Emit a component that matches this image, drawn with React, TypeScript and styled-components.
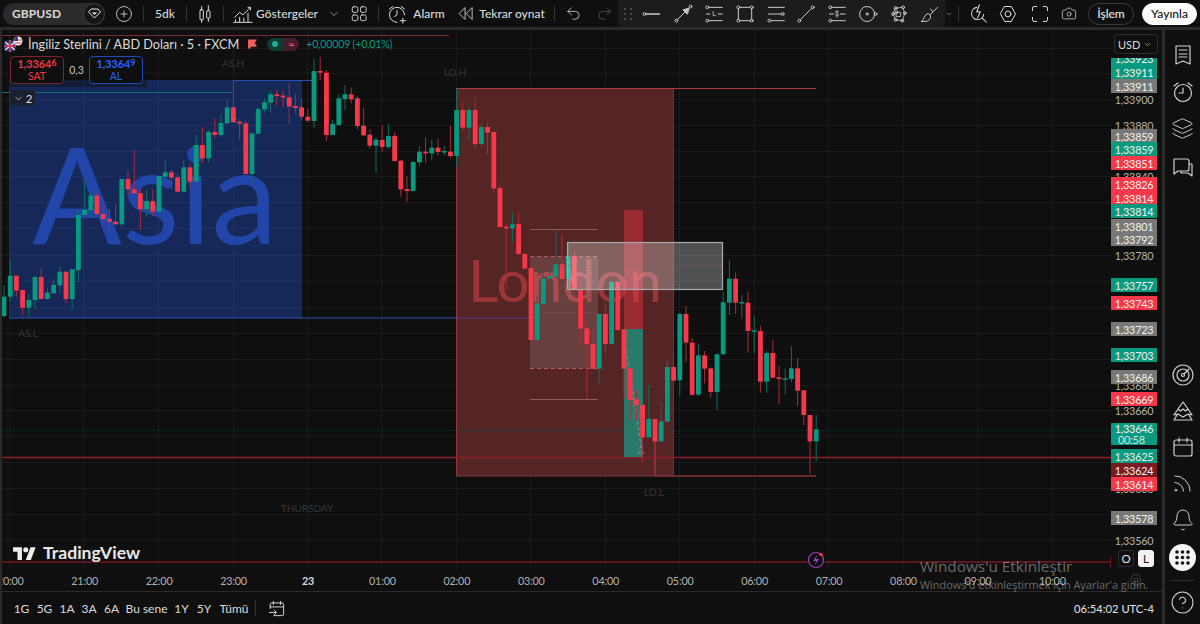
import React, { FC, ReactNode } from 'react';
import styled, { createGlobalStyle } from 'styled-components';
import { Bell, Camera, ChevronDown, CirclePlus, CircleHelp, Layers, Redo2, Rss, Undo2 } from 'lucide-react';

const FONT = `Lato, "Noto Sans", "Liberation Sans", sans-serif`;
const GREEN = '#089981';
const RED = '#f7374a';

type Row = [string, number, number, number, number];

const toCandles = (base: number, rows: Row[]) =>
  rows.map(([c, top, bottom, high, low]) => ({
    up: c === 'g',
    top: base + top / 3,
    bottom: base + bottom / 3,
    high: base + high / 3,
    low: base + low / 3,
  }));

const candles = [
  ...toCandles(80, [
    ['g', 650, 708, 615, 712], ['g', 587, 650, 540, 665], ['r', 587, 632, 587, 650], ['r', 630, 683, 630, 705],
    ['g', 660, 683, 642, 712], ['g', 591, 660, 585, 688], ['r', 591, 657, 563, 657], ['g', 638, 657, 622, 660],
    ['g', 615, 640, 595, 640], ['g', 575, 616, 560, 638], ['r', 575, 657, 575, 670], ['g', 568, 657, 568, 688],
    ['g', 405, 570, 393, 605], ['g', 390, 405, 300, 405], ['g', 347, 390, 335, 415], ['r', 347, 402, 335, 405],
    ['r', 402, 417, 370, 430], ['r', 417, 425, 385, 455], ['r', 425, 433, 373, 435], ['g', 297, 433, 297, 440],
    ['r', 297, 328, 272, 345], ['r', 328, 340, 210, 340], ['r', 340, 387, 325, 450], ['g', 363, 387, 330, 410],
    ['r', 363, 395, 328, 408], ['g', 288, 395, 288, 395], ['g', 277, 290, 238, 300], ['r', 277, 293, 270, 325],
    ['r', 292, 335, 283, 337], ['g', 262, 335, 240, 335], ['r', 262, 305, 250, 325], ['g', 195, 305, 165, 305],
    ['r', 195, 235, 140, 250], ['g', 156, 235, 150, 248], ['r', 156, 165, 115, 175], ['g', 129, 165, 102, 170],
    ['g', 82, 130, 60, 130], ['r', 82, 127, 0, 127], ['r', 125, 131, 118, 180], ['r', 130, 282, 122, 282],
    ['g', 160, 282, 160, 315], ['g', 87, 161, 82, 161], ['g', 67, 88, 55, 97], ['g', 43, 68, 32, 97],
    ['r', 43, 48, 30, 78], ['r', 47, 52, 32, 82], ['r', 52, 80, 10, 130], ['r', 78, 84, 42, 100],
    ['r', 82, 110, 55, 120], ['r', 110, 122, 87, 125],
  ]),
  ...toCandles(60, [
    ['g', 33, 183, -3, 205], ['r', 33, 38, -9, 60], ['r', 38, 225, 30, 243], ['g', 192, 225, 180, 225],
    ['g', 115, 195, 103, 197], ['g', 103, 117, 75, 150], ['r', 103, 118, 83, 130], ['r', 115, 198, 108, 208],
    ['r', 197, 226, 142, 228], ['r', 224, 257, 208, 267], ['g', 239, 257, 232, 340], ['r', 240, 261, 196, 275],
    ['g', 228, 261, 192, 266], ['r', 228, 303, 217, 304], ['r', 302, 388, 300, 410], ['r', 387, 393, 348, 425],
    ['g', 306, 393, 303, 395], ['g', 275, 307, 258, 320], ['r', 275, 280, 232, 308], ['g', 263, 280, 240, 302],
    ['r', 263, 276, 236, 287], ['g', 273, 276, 258, 287], ['r', 275, 288, 197, 293],
  ]),
  ...toCandles(80, [
    ['g', 90, 228, 25, 260], ['r', 90, 143, 67, 152], ['g', 90, 143, 82, 180], ['r', 90, 192, 52, 207],
    ['g', 141, 192, 132, 198], ['r', 141, 158, 125, 222], ['r', 156, 325, 156, 335], ['r', 324, 441, 316, 443],
  ]),
  ...toCandles(220, [
    ['r', 20, 25, 8, 210], ['g', 13, 25, -20, 66], ['r', 12, 102, -24, 105], ['r', 102, 146, 100, 148],
    ['r', 144, 360, 144, 362], ['g', 250, 360, 225, 362], ['g', 176, 252, 145, 350], ['g', 168, 176, 145, 258],
    ['g', 133, 170, 28, 175], ['r', 133, 177, 42, 178], ['g', 110, 177, 65, 210], ['r', 108, 207, 95, 210],
    ['r', 208, 326, 168, 375], ['r', 325, 372, 300, 537], ['r', 372, 446, 318, 448], ['g', 282, 446, 280, 492],
    ['r', 282, 372, 248, 402], ['g', 186, 372, 182, 375], ['r', 186, 330, 175, 332], ['r', 328, 446, 328, 535],
    ['r', 445, 540, 445, 600], ['r', 538, 555, 510, 600], ['r', 555, 652, 555, 728], ['g', 597, 652, 495, 652],
    ['r', 597, 664, 597, 768], ['g', 604, 664, 545, 667], ['g', 441, 605, 422, 610], ['r', 441, 482, 418, 484],
    ['g', 282, 481, 278, 527], ['r', 282, 368, 258, 425], ['r', 368, 524, 355, 528], ['g', 406, 524, 372, 528],
    ['r', 406, 446, 393, 490], ['r', 445, 516, 442, 533], ['g', 403, 516, 400, 570], ['g', 247, 403, 215, 405],
    ['g', 176, 248, 120, 285], ['r', 176, 248, 158, 282], ['g', 246, 249, 225, 296], ['r', 248, 333, 214, 398],
    ['g', 331, 334, 286, 400], ['r', 333, 485, 318, 518], ['g', 399, 485, 393, 518], ['r', 399, 473, 360, 475],
    ['r', 472, 477, 437, 552], ['g', 475, 478, 445, 522], ['g', 445, 477, 378, 487], ['r', 445, 512, 414, 557],
    ['r', 511, 585, 510, 615], ['r', 585, 664, 585, 762], ['g', 628, 664, 585, 724],
  ]),
];

const gridY = [48, 73, 99, 125, 151, 176, 202, 228, 255, 281, 307, 333, 359, 385, 410, 436, 462, 488, 514, 540];
const gridX = [9, 83, 158, 233, 307, 381, 456, 530, 605, 679, 754, 828, 903, 977, 1052];

type Kind = 'green' | 'red' | 'gray' | 'dark' | 'plain';

const priceTags: [string, number, Kind][] = [
  ['1,33900', 99, 'plain'], ['1,33880', 125, 'plain'], ['1,33840', 176, 'plain'], ['1,33780', 255, 'plain'],
  ['1,33760', 281, 'plain'], ['1,33680', 385, 'plain'], ['1,33660', 410, 'plain'], ['1,33600', 488, 'plain'],
  ['1,33580', 514, 'plain'], ['1,33560', 540, 'plain'],
  ['1,33923', 58, 'green'], ['1,33911', 72, 'green'], ['1,33911', 86, 'gray'], ['1,33859', 136, 'gray'],
  ['1,33859', 149, 'green'], ['1,33851', 163, 'red'], ['1,33826', 184, 'red'], ['1,33814', 198, 'red'],
  ['1,33814', 211, 'green'], ['1,33801', 226, 'gray'], ['1,33792', 239, 'gray'], ['1,33757', 285, 'green'],
  ['1,33743', 303, 'red'], ['1,33723', 329, 'gray'], ['1,33703', 355, 'green'], ['1,33686', 377, 'gray'],
  ['1,33669', 399, 'red'], ['1,33625', 456, 'green'], ['1,33624', 470, 'dark'], ['1,33614', 484, 'red'],
  ['1,33578', 518, 'gray'],
];

const tagColors: Record<Kind, string> = {
  green: GREEN,
  red: RED,
  gray: '#787878',
  dark: '#7a1a22',
  plain: 'transparent',
};

const hours = ['20:00', '21:00', '22:00', '23:00', '23', '01:00', '02:00', '03:00', '04:00', '05:00', '06:00', '07:00', '08:00', '09:00', '10:00'];
const ranges: [string, number][] = [['1G', 23], ['5G', 23], ['1A', 22], ['3A', 22], ['6A', 23], ['Bu sene', 47], ['1Y', 23], ['5Y', 22], ['Tümü', 38]];

const GlobalStyle = createGlobalStyle`
  html, body { margin: 0; padding: 0; background: #0f0f0f; }
  body { font-family: ${FONT}; color: #dbdbdb; }
`;

const Page = styled.div`
  position: relative;
  width: 1200px;
  height: 624px;
  overflow: hidden;
  display: flex;
  flex-direction: column;
  background: #0f0f0f;
`;

const TopBar = styled.header`
  height: 27px;
  flex: none;
  display: flex;
  align-items: center;
  padding-left: 3px;
  background: #0f0f0f;
  font-size: 12px;
  font-weight: 500;
`;

const SymbolPill = styled.div`
  width: 102px;
  height: 22px;
  flex: none;
  display: flex;
  align-items: center;
  justify-content: space-between;
  padding-left: 9px;
  box-sizing: border-box;
  border-radius: 11px;
  background: #2b2b2b;
  font-weight: 700;
  letter-spacing: 0.1px;
`;

const DiamondBadge = styled.span`
  width: 20px;
  height: 20px;
  display: flex;
  align-items: center;
  justify-content: center;
  border-radius: 50%;
  background: #151515;
  border: 1px solid #3d3d3d;
`;

const Cell = styled.div<{ $w: number; $ml?: number }>`
  width: ${(p) => p.$w}px;
  margin-left: ${(p) => p.$ml || 0}px;
  flex: none;
  display: flex;
  align-items: center;
  justify-content: center;
  color: #dbdbdb;
  white-space: nowrap;
`;

const Divider = styled.span<{ $ml?: number }>`
  width: 1px;
  height: 16px;
  flex: none;
  margin-left: ${(p) => p.$ml || 0}px;
  background: #333;
`;

const DrawBar = styled.div`
  width: 327px;
  height: 28px;
  flex: none;
  align-self: flex-start;
  margin-left: 1px;
  display: flex;
  align-items: center;
  background: #1c1c1c;
  border-radius: 0 0 6px 6px;
  color: #c9c9c9;
`;

const DrawCell = styled.div`
  width: 30.8px;
  flex: none;
  display: flex;
  justify-content: center;
`;

const Grip = styled.div`
  width: 19px;
  display: flex;
  justify-content: center;
`;

const TradeButton = styled.button`
  width: 46px;
  height: 22px;
  margin-left: 11px;
  padding: 0;
  flex: none;
  border: 1px solid #3a3a3a;
  border-radius: 11px;
  background: transparent;
  color: #e6e6e6;
  font: 500 12px ${FONT};
`;

const PublishButton = styled(TradeButton)`
  width: 55px;
  margin-left: 8px;
  border-color: #fff;
  background: #fff;
  color: #0f0f0f;
`;

const TopRule = styled.div`
  height: 3px;
  flex: none;
  background: #2a2a2a;
`;

const Main = styled.div`
  flex: 1;
  min-height: 0;
  display: flex;
`;

const ChartColumn = styled.div`
  width: 1162px;
  flex: none;
  display: flex;
  flex-direction: column;
  border-left: 2px solid #2a2a2a;
  box-sizing: border-box;
`;

const PlotRow = styled.div`
  height: 540px;
  flex: none;
  display: flex;
`;

const Plot = styled.div`
  position: relative;
  width: 1109px;
  height: 540px;
  flex: none;
  overflow: hidden;
`;

const PlotSvg = styled.svg`
  display: block;
  width: 1109px;
  height: 540px;
`;

const Legend = styled.div`
  position: absolute;
  left: 0;
  top: 6px;
  display: flex;
  align-items: center;
  height: 16px;
  font-size: 12.7px;
  white-space: nowrap;
`;

const SymbolIcon = styled.svg`
  width: 24px;
  height: 18px;
  margin: 0 2px 0 0;
`;

const Flag = styled.svg`
  width: 9px;
  height: 10px;
  margin-left: 9px;
`;

const StatusPill = styled.div`
  display: flex;
  width: 32px;
  height: 13px;
  margin-left: 10px;
`;

const StatusHalf = styled.span<{ $bg: string; $radius: string }>`
  flex: 1;
  display: flex;
  align-items: center;
  justify-content: center;
  background: ${(p) => p.$bg};
  border-radius: ${(p) => p.$radius};
  color: #e8507a;
  font-size: 12px;
  line-height: 13px;
`;

const StatusDot = styled.span`
  width: 6px;
  height: 6px;
  border-radius: 50%;
  background: #22ab94;
`;

const Change = styled.span`
  margin-left: 7px;
  color: ${GREEN};
  font-size: 10.6px;
  letter-spacing: -0.2px;
`;

const OrderPanel = styled.div`
  position: absolute;
  left: 7px;
  top: 25px;
  padding: 1px 4px 3px 1px;
  display: flex;
  align-items: center;
  background: rgba(15, 15, 15, 0.45);
`;

const OrderBox = styled.div<{ $color: string; $border: string }>`
  width: 54px;
  height: 28px;
  box-sizing: border-box;
  display: flex;
  flex-direction: column;
  align-items: center;
  justify-content: center;
  border: 1px solid ${(p) => p.$border};
  border-radius: 4px;
  background: #0f0f0f;
  color: ${(p) => p.$color};
  font-size: 10.5px;
  line-height: 12px;
`;

const OrderPrice = styled.span`
  font-size: 10.8px;
  font-weight: 700;
  sup { font-size: 9px; line-height: 0; vertical-align: 2px; }
`;

const Spread = styled.span`
  width: 25px;
  text-align: center;
  font-size: 10.5px;
  color: #c4c4c4;
`;

const CollapseChip = styled.div`
  position: absolute;
  left: 8px;
  top: 60px;
  width: 25px;
  height: 16px;
  display: flex;
  align-items: center;
  justify-content: center;
  gap: 2px;
  border-radius: 3px;
  background: #1b2030;
  font-size: 11.5px;
`;

const Faint = styled.span<{ $x: number; $y: number }>`
  position: absolute;
  left: ${(p) => p.$x}px;
  top: ${(p) => p.$y}px;
  transform: translate(-50%, -50%);
  color: #383838;
  font-size: 10px;
  white-space: nowrap;
`;

const Logo = styled.div`
  position: absolute;
  left: 10px;
  top: 512px;
  display: flex;
  align-items: center;
  gap: 6px;
  color: #e8e8e8;
  font-size: 17.6px;
  font-weight: 700;
`;

const Boost = styled.div`
  position: absolute;
  left: 805px;
  top: 521px;
  width: 18px;
  height: 18px;
  display: flex;
  background: #0f0f0f;
  border-radius: 50%;
`;

const PriceAxis = styled.div`
  position: relative;
  flex: 1;
  overflow: hidden;
`;

const CurrencyCover = styled.div`
  position: absolute;
  left: 0;
  top: 0;
  right: 0;
  height: 27.5px;
  z-index: 2;
  background: #0f0f0f;
`;

const CurrencyButton = styled.div`
  position: absolute;
  left: 3px;
  top: 4px;
  width: 44px;
  height: 20px;
  box-sizing: border-box;
  padding: 0 5px 0 3px;
  display: flex;
  align-items: center;
  justify-content: space-between;
  border: 1px solid #2e2e2e;
  border-radius: 4px;
  font-size: 11px;
`;

const PriceTag = styled.div<{ $y: number; $kind: Kind }>`
  position: absolute;
  left: 0;
  top: ${(p) => p.$y - 37}px;
  width: 46px;
  height: 14px;
  display: flex;
  align-items: center;
  justify-content: center;
  z-index: ${(p) => (p.$kind === 'plain' ? 0 : 1)};
  background: ${(p) => tagColors[p.$kind]};
  color: ${(p) => (p.$kind === 'plain' ? '#b2b2b2' : '#f2f2f2')};
  font-size: 10.8px;
  letter-spacing: -0.2px;
`;

const LiveTag = styled.div`
  position: absolute;
  left: 0;
  top: 393px;
  width: 46px;
  height: 22px;
  z-index: 1;
  box-sizing: border-box;
  display: flex;
  flex-direction: column;
  align-items: center;
  background: ${GREEN};
  color: #f2f2f2;
  font-size: 10.8px;
  letter-spacing: -0.2px;
  line-height: 11px;
  span:last-child { align-self: flex-start; padding-left: 7px; opacity: 0.85; }
`;

const ScaleButton = styled.div<{ $active?: boolean; $x: number }>`
  position: absolute;
  left: ${(p) => p.$x}px;
  top: 520px;
  width: 16px;
  height: 17px;
  z-index: 2;
  display: flex;
  align-items: center;
  justify-content: center;
  box-sizing: border-box;
  border: 1px solid ${(p) => (p.$active ? '#f2f2f2' : '#2e2e2e')};
  border-radius: 3px;
  background: ${(p) => (p.$active ? '#f2f2f2' : '#0f0f0f')};
  color: ${(p) => (p.$active ? '#131313' : '#e8e8e8')};
  font-size: 11.5px;
`;

const TimeAxis = styled.div`
  position: relative;
  height: 22px;
  flex: none;
  display: flex;
  align-items: center;
  overflow: hidden;
  border-bottom: 1px solid #2a2a2a;
  padding-bottom: 1px;
  box-sizing: border-box;
`;

const Ticks = styled.div`
  display: flex;
  margin-left: -29px;
  flex: none;
`;

const Tick = styled.span<{ $strong?: boolean }>`
  width: 74.45px;
  flex: none;
  text-align: center;
  font-size: 10.8px;
  letter-spacing: -0.2px;
  font-weight: ${(p) => (p.$strong ? 700 : 400)};
  color: ${(p) => (p.$strong ? '#d8d8d8' : '#b2b2b2')};
`;

const AxisGear = styled.span`
  position: absolute;
  left: 1127px;
  top: 3px;
  display: flex;
  color: #555;
`;

const BottomBar = styled.footer`
  flex: 1;
  display: flex;
  align-items: center;
  padding-left: 8px;
  font-size: 12px;
`;

const ClockText = styled.span`
  margin-left: auto;
  margin-right: 8px;
  font-size: 11.2px;
  color: #e4e4e4;
`;

const VerticalRule = styled.div`
  width: 3px;
  flex: none;
  background: #2a2a2a;
`;

const SideBar = styled.aside`
  flex: 1;
  display: flex;
  flex-direction: column;
  color: #d0d0d0;
  padding-top: 6px;
`;

const SideSlot = styled.div<{ $h: number }>`
  height: ${(p) => p.$h}px;
  flex: none;
  display: flex;
  align-items: center;
  justify-content: center;
`;

const AppsButton = styled.div`
  width: 27px;
  height: 27px;
  display: flex;
  align-items: center;
  justify-content: center;
  border-radius: 50%;
  background: #f5f5f5;
`;

const SideRule = styled.div`
  height: 1px;
  margin: 4px 5px 0;
  background: #2e2e2e;
`;

const Watermark = styled.div`
  position: absolute;
  left: 920px;
  top: 556px;
  color: rgba(255, 255, 255, 0.38);
  font: 400 15.3px "Open Sans", ${FONT};
  line-height: 20px;
  pointer-events: none;
  small {
    display: block;
    font-size: 10.9px;
    line-height: 18px;
  }
`;

const Glyph: FC<{ size?: number; children: ReactNode }> = ({ size = 22, children }) => (
  <svg width={size} height={size} viewBox="0 0 24 24" fill="none" stroke="currentColor" strokeWidth={1.2} strokeLinecap="round" strokeLinejoin="round">
    {children}
  </svg>
);

const Node: FC<{ x: number; y: number }> = ({ x, y }) => <circle cx={x} cy={y} r={1.7} />;

const drawTools: ReactNode[] = [
  <><Node x={3} y={12} /><path d="M5 12h16" strokeWidth={1.6} /></>,
  <><Node x={4} y={20} /><Node x={21} y={3} /><path d="M5 19l10-10" /><path d="M19 5l-7 2 5 5z" fill="currentColor" /></>,
  <><Node x={4} y={4} /><Node x={4} y={20} /><path d="M6 4h16M6 20h16M3 12h4M17 12h5" /><path d="M11 9v5h3" strokeWidth={1} /></>,
  <><path d="M5.5 4h13M20 5.5v13M18.500 20h-13M4 18.500v-13" /><Node x={4} y={4} /><Node x={20} y={4} /><Node x={4} y={20} /><Node x={20} y={20} /></>,
  <><path d="M3 4h19M3 12h15M6 20h16" /><Node x={20} y={12} /><Node x={4} y={20} /></>,
  <><Node x={4} y={20} /><Node x={20} y={4} /><path d="M5.500 18.500l13-13" /></>,
  <><Node x={4} y={4} /><Node x={4} y={20} /><path d="M6 4h16M6 20h16M3 12h5M16 12h6" /><path d="M14 9.500c-1-1.500-4-1-4 .5s4 1.500 4 3-3 2-4 .5M12 8v8" strokeWidth={0.9} /></>,
  <><circle cx={11} cy={12} r={9} /><circle cx={11} cy={12} r={1.3} /><Node x={21} y={12} /></>,
  <><path d="M8 5l8-1 3 7-3 9-8-1-3-7zM9 10h5v5H9z" strokeWidth={1} /><Node x={8} y={5} /><Node x={17} y={4} /><Node x={19} y={11} /><Node x={5} y={12} /><Node x={8} y={19} /><Node x={16} y={20} /><Node x={9} y={10} /></>,
  <><path d="M2 21c4 0 7 0 9-2 2-2 2-4 1-6-1-1.500-3-2-5 0-2 2-2 5-5 8zM12 13l9-9M13 6l2 3" /></>,
];

const sideTop: ReactNode[] = [
  <path d="M5 3h14v18l-7-3-7 3zM8 7h8M8 11h8M8 14h8" />,
  <><circle cx={12} cy={13} r={8.500} /><path d="M12 8v5h-4M3 6l4-3M21 6l-4-3" /></>,
];

const sideBottom: ReactNode[] = [
  <><circle cx={12} cy={12} r={10} /><circle cx={12} cy={12} r={6} /><circle cx={12} cy={12} r={1.500} /><path d="M13 11l5-5" /></>,
  <path d="M12 3l5 7-2.500 2-2.500-2-2.500 2L7 10zM17 10l4 6-4-1-5 3-5-3-4 1 4-6M3 21h18l-3-5M3 21l3-5" />,
  <><rect x={3} y={5} width={18} height={16} rx={2} /><path d="M3 10h18M8 3v4M16 3v4" /></>,
];

const App: FC = () => (
  <Page>
    <GlobalStyle />
    <TopBar>
      <SymbolPill>
        GBPUSD
        <DiamondBadge>
          <svg width="13" height="11" viewBox="0 0 13 11" fill="none" stroke="#e8e8e8"><path d="M3 1h7l2.500 3-6 6-6-6z" /><path d="M4.500 4.500l2 2 2-2" fill="#e8e8e8" /></svg>
        </DiamondBadge>
      </SymbolPill>
      <Cell $w={38}><CirclePlus size={18} strokeWidth={1.1} /></Cell>
      <Divider />
      <Cell $w={42}>5dk</Cell>
      <Divider />
      <Cell $w={36}>
        <Glyph size={20}><path d="M8 3v4M8 19v3M16 2v6M16 17v4" /><rect x={6} y={7} width={4} height={12} rx={1} /><rect x={14} y={8} width={4} height={9} rx={1} /></Glyph>
      </Cell>
      <Divider />
      <Cell $w={26} $ml={6}>
        <Glyph size={20}><path d="M2 16l6-6 4 3 9-9M18 4h3v3M3 21v-2M8 21v-5M13 21v-4M18 21V11M1 22h22" /></Glyph>
      </Cell>
      <Cell $w={62}>Göstergeler</Cell>
      <Cell $w={32}><ChevronDown size={12} strokeWidth={1.3} /></Cell>
      <Cell $w={18}>
        <Glyph size={19}><rect x={3} y={3} width={7.500} height={7.500} rx={2} /><rect x={14} y={3} width={7.500} height={7.500} rx={2} /><rect x={3} y={14} width={7.500} height={7.500} rx={2} /><rect x={14} y={14} width={7.500} height={7.500} rx={2} /></Glyph>
      </Cell>
      <Divider $ml={10} />
      <Cell $w={30} $ml={3}>
        <Glyph size={20}><path d="M21 13a9 9 0 1 0-9 9M12 8v5l-3 2M3 6l4-3M21 6l-4-3M19 17v6M16 20h6" /></Glyph>
      </Cell>
      <Cell $w={34}>Alarm</Cell>
      <Cell $w={26} $ml={6}>
        <Glyph size={17}><path d="M11 4l-8 8 8 8zM21 4l-8 8 8 8z" /></Glyph>
      </Cell>
      <Cell $w={68}>Tekrar oynat</Cell>
      <Divider $ml={8} />
      <Cell $w={36}><Undo2 size={17} strokeWidth={1.1} /></Cell>
      <Cell $w={26}><Redo2 size={17} strokeWidth={1.1} color="#5c5c5c" /></Cell>
      <DrawBar>
        <Grip>
          <svg width="8" height="12" viewBox="0 0 8 12" fill="#5a5a5a"><circle cx="1" cy="1" r="1" /><circle cx="7" cy="1" r="1" /><circle cx="1" cy="6" r="1" /><circle cx="7" cy="6" r="1" /><circle cx="1" cy="11" r="1" /><circle cx="7" cy="11" r="1" /></svg>
        </Grip>
        {drawTools.map((tool, i) => (
          <DrawCell key={i}><Glyph size={20}>{tool}</Glyph></DrawCell>
        ))}
      </DrawBar>
      <Cell $w={8}><ChevronDown size={8} strokeWidth={1.3} /></Cell>
      <Divider $ml={5} />
      <Cell $w={38}>
        <Glyph size={21}><path d="M10 5a7 7 0 1 0 8 8M16 17l5 5M13 2l-3 8h4l-3 7" /></Glyph>
      </Cell>
      <Cell $w={22}>
        <Glyph size={20}><path d="M8 3h8l5 9-5 9H8l-5-9z" /><circle cx={12} cy={12} r={3.500} /></Glyph>
      </Cell>
      <Cell $w={42}>
        <Glyph size={20}><path d="M8 3H5a2 2 0 0 0-2 2v3M16 3h3a2 2 0 0 1 2 2v3M8 21H5a2 2 0 0 1-2-2v-3M16 21h3a2 2 0 0 0 2-2v-3" /></Glyph>
      </Cell>
      <Cell $w={16}><Camera size={21} strokeWidth={1.1} /></Cell>
      <TradeButton>İşlem</TradeButton>
      <PublishButton>Yayınla</PublishButton>
    </TopBar>
    <TopRule />
    <Main>
      <ChartColumn>
        <PlotRow>
          <Plot>
            <PlotSvg viewBox="2 30 1109 540">
              {gridY.map((y) => <line key={y} x1={2} x2={1111} y1={y + 0.5} y2={y + 0.5} stroke="#1a1a1a" />)}
              {gridX.map((x) => <line key={x} x1={x + 0.5} x2={x + 0.5} y1={30} y2={570} stroke="#1a1a1a" />)}
              <line x1={2} x2={449} y1={35.5} y2={35.5} stroke="#7b2a33" />
              <rect x={9} y={80} width={293} height={238} fill="#2962ff" fillOpacity={0.3} />
              <text x={32} y={244} fontSize={133} fill="#2145a8" fontFamily={FONT}>Asia</text>
              <line x1={2} x2={232} y1={92.5} y2={92.5} stroke="#0f6f78" />
              <line x1={233} x2={312} y1={80.5} y2={80.5} stroke="#2a50b8" />
              <rect x={456.5} y={88.5} width={217} height={387.5} fill="#5a2626" fillOpacity={0.94} />
              <line x1={9} x2={456} y1={318} y2={318} stroke="#2a50b8" />
              <line x1={456} x2={528} y1={318} y2={318} stroke="#5b3a8c" />
              <path d="M456.500 476V88.500" stroke="#963c3a" fill="none" />
              <path d="M673.500 88.500V476" stroke="#723432" fill="none" />
              <text x={468} y={302} fontSize={59} fill="#e0454c" fillOpacity={0.5} fontFamily={FONT}>London</text>
              <line x1={456} x2={816} y1={88.5} y2={88.5} stroke="#b03a40" />
              <line x1={456} x2={655} y1={476} y2={476} stroke="#7a3a3a" />
              <line x1={655} x2={816} y1={476} y2={476} stroke="#8a3038" strokeWidth={1.5} />
              <line x1={655} x2={655} y1={440} y2={476} stroke="#a8323c" />
              <line x1={2} x2={1111} y1={457.5} y2={457.5} stroke="#8c1f2c" strokeWidth={1.5} />
              <line x1={2} x2={1111} y1={430.5} y2={430.5} stroke="#0a4a40" strokeDasharray="1 3" />
              <line x1={2} x2={1111} y1={562} y2={562} stroke="#7a1a24" strokeWidth={1.5} />
              <line x1={1111} x2={1111} y1={556} y2={568} stroke="#7a1a24" strokeWidth={1.5} />
              <rect x={624} y={210} width={19} height={119} fill="#f23645" fillOpacity={0.42} />
              <rect x={624} y={329} width={19} height={128} fill="#2a7a6c" />
              <path d="M626 350Q636 410 642 454M638 452l4 3 3-4" fill="none" stroke="#8c9c98" strokeDasharray="3 3" />
              <rect x={530} y={256.5} width={68} height={112} fill="#fff" fillOpacity={0.12} />
              <path d="M530 256.500h68M530 368.500h68" stroke="#b85a62" strokeDasharray="4 3" />
              <line x1={530} x2={598} y1={312.5} y2={312.5} stroke="#8f6266" strokeDasharray="1 3" />
              <path d="M530 229.500h68M530 399.500h68" stroke="#8f5a5c" />
              {candles.map((c, i) => {
                const x = 4 + i * 6.2;
                const color = c.up ? GREEN : RED;
                return (
                  <g key={i}>
                    <line x1={x} x2={x} y1={c.high} y2={c.low} stroke={c.up ? '#0b6e5e' : '#a82c3a'} />
                    <rect x={x - 2.4} y={c.top} width={4.8} height={Math.max(c.bottom - c.top, 1.5)} fill={color} />
                  </g>
                );
              })}
              <rect x={567.5} y={242.5} width={155} height={47} fill="#fff" fillOpacity={0.28} stroke="#a8a8a8" strokeWidth={1.2} />
              <line x1={568} x2={722} y1={265.5} y2={265.5} stroke="#8c6a6a" strokeDasharray="1 3" />
            </PlotSvg>
            <Legend>
              <SymbolIcon viewBox="0 0 24 18">
                <circle cx="8" cy="11" r="6" fill="#27408b" />
                <path d="M3 7l10 8M13 7L3 15" stroke="#eee" strokeWidth="1.2" />
                <path d="M8 5v12M2 11h12" stroke="#e8384a" strokeWidth="1.6" />
                <circle cx="16" cy="6" r="4.500" fill="#f2f2f2" />
                <path d="M12 5h8M13 8h6" stroke="#e8384a" strokeWidth="1.2" />
                <path d="M12 5a4.500 4.500 0 0 1 4-3.500V6h-4z" fill="#27408b" />
              </SymbolIcon>
              İngiliz Sterlini / ABD Doları · 5 · FXCM
              <Flag viewBox="0 0 10 10"><path d="M0 0h10L7.500 3.500 10 8H3v2H0z" fill="#f0605a" /></Flag>
              <StatusPill>
                <StatusHalf $bg="#123c35" $radius="7px 0 0 7px"><StatusDot /></StatusHalf>
                <StatusHalf $bg="#451c2a" $radius="0 7px 7px 0">≈</StatusHalf>
              </StatusPill>
              <Change>+0,00009 (+0,01%)</Change>
            </Legend>
            <OrderPanel>
              <OrderBox $color="#f23645" $border="#7e2530">
                <OrderPrice>1,3364<sup>6</sup></OrderPrice>
                SAT
              </OrderBox>
              <Spread>0,3</Spread>
              <OrderBox $color="#2962ff" $border="#1f4ab8">
                <OrderPrice>1,3364<sup>9</sup></OrderPrice>
                AL
              </OrderBox>
            </OrderPanel>
            <CollapseChip><ChevronDown size={11} strokeWidth={1.5} />2</CollapseChip>
            <Faint $x={231} $y={33}>AS.H</Faint>
            <Faint $x={26} $y={303}>AS.L</Faint>
            <Faint $x={453} $y={42}>LO.H</Faint>
            <Faint $x={652} $y={462}>LO.L</Faint>
            <Faint $x={305} $y={478}>THURSDAY</Faint>
            <Logo>
              <svg width="25" height="14" viewBox="0 2 36 22" fill="#eee"><path d="M14 24H7V11H0V4h14v20zM28 24h-8l7.500-20h8L28 24z" /><circle cx="20" cy="8" r="4" /></svg>
              TradingView
            </Logo>
            <Boost>
              <svg width="18" height="18" viewBox="0 0 18 18" fill="none">
                <circle cx="9" cy="9" r="7.500" stroke="#9c3fb5" strokeWidth="1.200" />
                <path d="M10 4L6 10h3l-1 4 4-6H9z" fill="#9c3fb5" />
                <circle cx="14" cy="3.500" r="1.800" fill="#f23645" />
              </svg>
            </Boost>
          </Plot>
          <PriceAxis>
            <CurrencyCover>
              <CurrencyButton>USD<ChevronDown size={9} strokeWidth={1.6} /></CurrencyButton>
            </CurrencyCover>
            {priceTags.map(([label, y, kind]) => (
              <PriceTag key={label + y} $y={y} $kind={kind}>{label}</PriceTag>
            ))}
            <LiveTag><span>1,33646</span><span>00:58</span></LiveTag>
            <ScaleButton $x={7}>O</ScaleButton>
            <ScaleButton $x={27} $active>L</ScaleButton>
          </PriceAxis>
        </PlotRow>
        <TimeAxis>
          <Ticks>
            {hours.map((h) => <Tick key={h} $strong={h === '23'}>{h}</Tick>)}
          </Ticks>
          <AxisGear>
            <Glyph size={14}><path d="M8 3h8l5 9-5 9H8l-5-9z" /><circle cx={12} cy={12} r={3.500} /></Glyph>
          </AxisGear>
        </TimeAxis>
        <BottomBar>
          {ranges.map(([label, w]) => <Cell key={label} $w={w}>{label}</Cell>)}
          <Divider $ml={2} />
          <Cell $w={40}>
            <Glyph size={19}><path d="M4 12V7a2 2 0 0 1 2-2h13a2 2 0 0 1 2 2v12a2 2 0 0 1-2 2H9M4 10h17M8 3v4M17 3v4M3 17h8M9 14l3 3-3 3" /></Glyph>
          </Cell>
          <ClockText>06:54:02 UTC-4</ClockText>
        </BottomBar>
      </ChartColumn>
      <VerticalRule />
      <SideBar>
        {sideTop.map((icon, i) => <SideSlot key={i} $h={37}><Glyph size={24}>{icon}</Glyph></SideSlot>)}
        <SideSlot $h={36}><Layers size={23} strokeWidth={1} /></SideSlot>
        <SideSlot $h={42}>
          <Glyph size={24}><path d="M3 4h13a2 2 0 0 1 2 2v8a2 2 0 0 1-2 2H7l-4 3zM18 9h3v12l-4-3H10v-2" /></Glyph>
        </SideSlot>
        <SideSlot $h={169} />
        {sideBottom.map((icon, i) => <SideSlot key={i} $h={36}><Glyph size={24}>{icon}</Glyph></SideSlot>)}
        <SideSlot $h={36}><Rss size={23} strokeWidth={1} /></SideSlot>
        <SideSlot $h={37}><Bell size={24} strokeWidth={1} /></SideSlot>
        <SideSlot $h={38}>
          <AppsButton>
            <svg width="15" height="15" viewBox="0 0 15 15" fill="#131313">
              {[2, 7.5, 13].map((cy) => [2, 7.5, 13].map((cx) => <circle key={`${cx}-${cy}`} cx={cx} cy={cy} r="1.800" />))}
            </svg>
          </AppsButton>
        </SideSlot>
        <SideRule />
        <SideSlot $h={42}><CircleHelp size={25} strokeWidth={1} /></SideSlot>
      </SideBar>
    </Main>
    <Watermark>
      Windows'u Etkinleştir
      <small>Windows'u etkinleştirmek için Ayarlar'a gidin.</small>
    </Watermark>
  </Page>
);

export default App;
